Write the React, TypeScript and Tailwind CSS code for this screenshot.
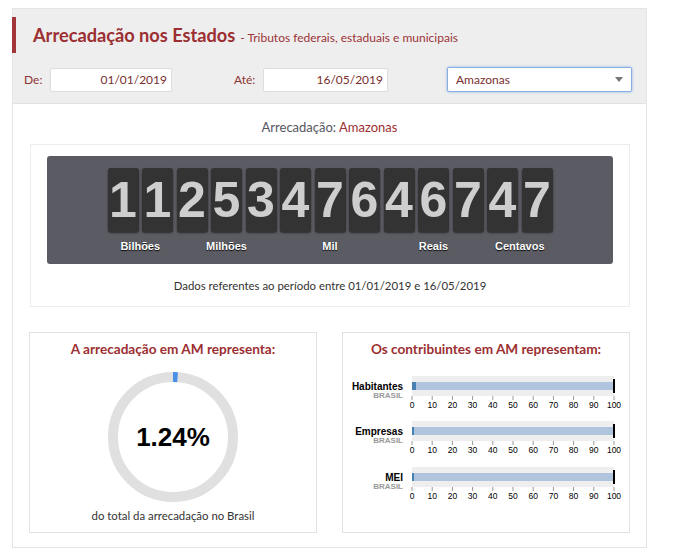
import React from "react";

const groups: { label: string; digits: string }[] = [
  { label: "Bilhões", digits: "11" },
  { label: "Milhões", digits: "253" },
  { label: "Mil", digits: "476" },
  { label: "Reais", digits: "467" },
  { label: "Centavos", digits: "47" },
];

const bullets = [
  { label: "Habitantes", value: 2 },
  { label: "Empresas", value: 1 },
  { label: "MEI", value: 1 },
];

function Bullets() {
  const x0 = 69;
  const w = 202;
  const rows = [18, 63, 109];
  const ticks = [0, 10, 20, 30, 40, 50, 60, 70, 80, 90, 100];
  return (
    <svg width="286" height="150" className="block" style={{ fontFamily: '"Liberation Sans", Arial, sans-serif' }}>
      {bullets.map((b, i) => {
        const by = rows[i];
        return (
          <g key={b.label}>
            <rect x={x0} y={by} width={w} height={20} fill="#eeeeee" />
            <rect x={x0} y={by + 6} width={w} height={8} fill="#b0c4de" />
            <rect x={x0} y={by + 6} width={b.value * 2} height={8} fill="#4682b4" />
            <line x1={x0 + w} x2={x0 + w} y1={by + 3} y2={by + 17} stroke="#000" strokeWidth={2} />
            <text x={60} y={by + 14} textAnchor="end" fontSize="10" fontWeight="bold" fill="#000">
              {b.label}
            </text>
            <text x={60} y={by + 22} textAnchor="end" fontSize="8" fontWeight="bold" fill="#999">
              BRASIL
            </text>
            {ticks.map((t) => {
              const tx = x0 + (t / 100) * w;
              return (
                <g key={t}>
                  <line x1={tx} x2={tx} y1={by + 20} y2={by + 24} stroke="#999" strokeWidth={1} />
                  <text x={tx} y={by + 32} textAnchor="middle" fontSize="8.5" fill="#000">
                    {t}
                  </text>
                </g>
              );
            })}
          </g>
        );
      })}
    </svg>
  );
}

function Donut() {
  const r = 60;
  const c = 2 * Math.PI * r;
  const pct = 1.24;
  return (
    <div className="relative w-[130px] h-[130px] mx-auto">
      <svg width="130" height="130" className="block">
        <circle cx="65" cy="65" r={r} fill="none" stroke="#e0e0e0" strokeWidth="10" />
        <circle
          cx="65"
          cy="65"
          r={r}
          fill="none"
          stroke="#4a90e8"
          strokeWidth="10"
          strokeDasharray={`${(c * pct) / 100} ${c}`}
          transform="rotate(-90 65 65)"
        />
      </svg>
      <div className="absolute inset-0 flex items-center justify-center font-['Liberation_Sans',Arial,sans-serif] font-bold text-[26px] text-black">
        1.24%
      </div>
    </div>
  );
}

export default function App() {
  return (
    <div className="w-[680px] h-[560px] bg-white pt-[8px] pl-[12px] font-['Lato','Open_Sans',sans-serif]">
      <div className="w-[635px] h-[540px] border border-[#e4e4e4] flex flex-col">
        {/* Header */}
        <div className="h-[95px] bg-[#eeeeee] border-b border-[#e2e2e2] flex flex-col">
          <div className="mt-[8px] h-[36px] flex items-center">
            <div className="-ml-px w-[4px] h-full bg-[#a3363a]" />
            <div className="ml-[17px] flex items-baseline">
              <span className="text-[18.2px] font-bold text-[#9c2f32] leading-none">Arrecadação nos Estados</span>
              <span className="ml-[5px] text-[12px] text-[#9c3336] leading-none">- Tributos federais, estaduais e municipais</span>
            </div>
          </div>
          <div className="mt-[14px] h-[25px] flex items-center text-[12px]">
            <span className="ml-[11px] w-[26px] text-[#8e3535]">De:</span>
            <div className="w-[122px] h-[24px] bg-white border border-[#dddddd] rounded-[2px] flex items-center justify-end pr-[4px] text-[#7a2e2e]">
              01/01/2019
            </div>
            <span className="ml-[62px] w-[29px] text-[#8e3535]">Até:</span>
            <div className="w-[125px] h-[24px] bg-white border border-[#dddddd] rounded-[2px] flex items-center justify-end pr-[4px] text-[#7a2e2e]">
              16/05/2019
            </div>
            <div className="ml-[59px] w-[185px] h-[25px] bg-white border border-[#86b0e4] rounded-[2px] shadow-[0_0_3px_rgba(90,140,220,0.6)] flex items-center justify-between pl-[8px] pr-[8px] text-[#7a2e2e]">
              <span>Amazonas</span>
              <svg width="8" height="5" viewBox="0 0 8 5">
                <polygon points="0,0 8,0 4,5" fill="#777" />
              </svg>
            </div>
          </div>
        </div>

        {/* Body */}
        <div className="mt-[15px] text-center text-[13px] leading-[16px]">
          <span className="text-[#555560]">Arrecadação: </span>
          <span className="text-[#9c2f32]">Amazonas</span>
        </div>

        <div className="mt-[9px] ml-[17px] w-[600px] h-[163px] border border-[#ececec] flex flex-col">
          <div className="mt-[11px] mx-[16px] h-[108px] bg-[#5b5b63] rounded-[3px] flex justify-center pt-[12px]">
            <div className="flex gap-[3.5px] font-['Liberation_Sans',Arial,sans-serif]">
              {groups.map((g) => (
                <div key={g.label} className="flex flex-col items-center">
                  <div className="flex gap-[3.5px]">
                    {g.digits.split("").map((d, i) => (
                      <div
                        key={i}
                        className="w-[31px] h-[64px] rounded-[3px] bg-[#333333] shadow-[0_1px_2px_rgba(0,0,0,0.55)] flex items-center justify-center text-[50px] font-bold text-[#cecece] leading-none"
                      >
                        {d}
                      </div>
                    ))}
                  </div>
                  <div className="mt-[7px] text-[11px] leading-[14px] font-bold text-white [text-shadow:0_1px_1px_rgba(0,0,0,0.9)]">
                    {g.label}
                  </div>
                </div>
              ))}
            </div>
          </div>
          <div className="mt-[14px] text-center text-[11.4px] leading-[16px] text-[#333]">
            Dados referentes ao período entre 01/01/2019 e 16/05/2019
          </div>
        </div>

        <div className="mt-[25px] ml-[16px] flex gap-[25px]">
          <div className="w-[288px] h-[201px] border border-[#e2e2e2] flex flex-col pt-[7px]">
            <div className="text-center text-[13.6px] leading-[18px] font-bold text-[#9c2f32]">
              A arrecadação em AM representa:
            </div>
            <div className="mt-[14px]">
              <Donut />
            </div>
            <div className="mt-[6px] text-center text-[11.4px] leading-[16px] text-[#333]">
              do total da arrecadação no Brasil
            </div>
          </div>
          <div className="w-[288px] h-[201px] border border-[#e2e2e2] flex flex-col pt-[7px]">
            <div className="text-center text-[13.6px] leading-[18px] font-bold text-[#9c2f32]">
              Os contribuintes em AM representam:
            </div>
            <Bullets />
          </div>
        </div>
      </div>
    </div>
  );
}
